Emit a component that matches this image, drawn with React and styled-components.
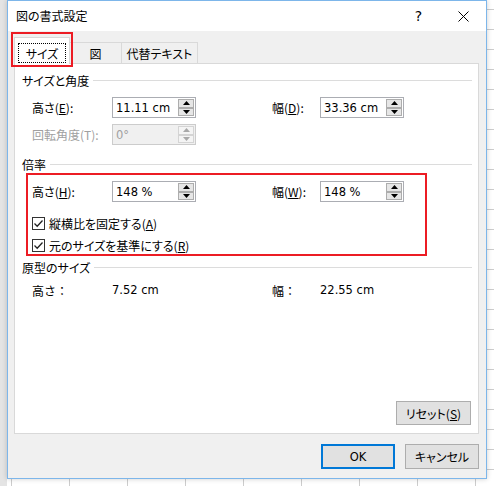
import React from 'react';
import styled, { createGlobalStyle, css } from 'styled-components';

const Global = createGlobalStyle`
  html, body { margin: 0; padding: 0; }
  body {
    font-family: "Noto Sans CJK JP", "Noto Sans", sans-serif;
    font-size: 12px;
    color: #000;
    font-feature-settings: "palt";
  }
`;

const Page = styled.div`
  width: 494px;
  height: 486px;
  box-sizing: border-box;
  padding: 0 7px 7px 7px;
  background-color: #fff;
  background-image:
    linear-gradient(to right, #e4e4e4 7px, transparent 7px),
    linear-gradient(to right, #cdcdcd 1px, transparent 1px),
    linear-gradient(to bottom, #cdcdcd 1px, transparent 1px);
  background-size: 100% 100%, 58px 20px, 58px 20px;
  background-position: 0 0, 11px 0, 0 9px;
  background-repeat: no-repeat, repeat, repeat;
`;

const Dialog = styled.div`
  width: 480px;
  height: 479px;
  box-sizing: border-box;
  border: 1px solid #7db6ea;
  background: #f0f0f0;
  display: flex;
  flex-direction: column;
  box-shadow: 0 0 5px rgba(0, 0, 0, 0.2);
`;

const TitleBar = styled.div`
  height: 30px;
  background: #fff;
  display: flex;
  align-items: center;
  padding-left: 8px;
`;

const Title = styled.div`
  flex: 1;
  font-size: 12px;
  margin-top: -1px;
`;

const CaptionButton = styled.div`
  width: 45px;
  height: 30px;
  display: flex;
  align-items: center;
  justify-content: center;
  font-family: "DejaVu Sans", sans-serif;
  font-size: 14px;
  color: #000;
`;

const Body = styled.div`
  flex: 1;
  display: flex;
  flex-direction: column;
  padding: 6px 7px 0 6px;
`;

const TabStrip = styled.div`
  display: flex;
  align-items: flex-end;
  height: 27px;
  margin-bottom: -1px;
  position: relative;
  z-index: 1;
`;

const Tab = styled.div`
  box-sizing: border-box;
  width: ${(p) => p.$w}px;
  height: ${(p) => (p.$active ? 27 : 22)}px;
  border: 1px solid #d9d9d9;
  border-bottom: ${(p) => (p.$active ? 'none' : '1px solid #d9d9d9')};
  background: ${(p) => (p.$active ? '#fff' : '#f0f0f0')};
  margin-left: ${(p) => (p.$first ? 0 : -1)}px;
  display: flex;
  align-items: center;
  justify-content: center;
  position: relative;
  ${(p) =>
    p.$active &&
    css`
      z-index: 2;
      padding: 5px 3px 1px;
      &::after {
        content: '';
        position: absolute;
        left: -4px;
        right: -4px;
        top: -6px;
        bottom: -3px;
        border: 2px solid #ec1c24;
      }
    `}
`;

const FocusBox = styled.div`
  flex: 1;
  align-self: stretch;
  border: 1px dotted #000;
  display: flex;
  align-items: center;
  justify-content: center;
`;

const Panel = styled.div`
  box-sizing: border-box;
  height: 371px;
  background: #fff;
  border: 1px solid #d9d9d9;
  padding: 8px 6px 8px 7px;
  display: flex;
  flex-direction: column;
`;

const Heading = styled.div`
  height: 16px;
  display: flex;
  align-items: center;
  margin-top: ${(p) => p.$mt || 0}px;
  &::after {
    content: '';
    flex: 1;
    height: 1px;
    background: #dcdcdc;
    margin-left: 4px;
  }
`;

const FieldRow = styled.div`
  display: grid;
  grid-template-columns: 80px 84px 76px 48px 84px;
  align-items: center;
  height: ${(p) => p.$h || 21}px;
  margin-top: ${(p) => p.$mt || 0}px;
  margin-left: ${(p) => (p.$flush ? 0 : 10)}px;
`;

const Label = styled.div`
  color: ${(p) => (p.$disabled ? '#a0a0a0' : '#000')};
  white-space: nowrap;
  font-feature-settings: ${(p) => (p.$fullWidth ? 'normal' : '"palt"')};
`;

const Value = styled.div`
  font-family: "DejaVu Sans", "Noto Sans CJK JP", sans-serif;
  font-size: 11.5px;
  white-space: nowrap;
`;

const Spacer = styled.div``;

const InputBox = styled.div`
  box-sizing: border-box;
  width: 84px;
  height: 21px;
  border: 1px solid ${(p) => (p.$disabled ? '#cccccc' : '#abadb3')};
  background: ${(p) => (p.$disabled ? '#f0f0f0' : '#fff')};
  display: flex;
  align-items: stretch;
`;

const InputText = styled.div`
  flex: 1;
  padding-left: 3px;
  display: flex;
  align-items: center;
  font-family: "DejaVu Sans", "Noto Sans CJK JP", sans-serif;
  font-size: 11.5px;
  color: ${(p) => (p.$disabled ? '#a0a0a0' : '#000')};
`;

const SpinCol = styled.div`
  display: flex;
  flex-direction: column;
  padding: 1px 1px 1px 0;
`;

const SpinBtn = styled.div`
  box-sizing: border-box;
  width: 16px;
  height: 9px;
  border: 1px solid ${(p) => (p.$disabled ? '#d4d4d4' : '#adadad')};
  background: ${(p) => (p.$disabled ? '#f4f4f4' : '#e6e6e6')};
  display: flex;
  align-items: center;
  justify-content: center;
`;

const RedBox = styled.div`
  box-sizing: border-box;
  width: 401px;
  margin-left: 4px;
  margin-top: 1px;
  border: 2px solid #ec1c24;
  padding: 6px 0 0 4px;
  display: flex;
  flex-direction: column;
`;

const CheckRow = styled.div`
  height: 18px;
  display: flex;
  align-items: center;
  margin-top: ${(p) => p.$mt || 0}px;
`;

const CheckBoxSq = styled.div`
  box-sizing: border-box;
  width: 13px;
  height: 13px;
  border: 1px solid #333;
  background: #fff;
  display: flex;
  align-items: center;
  justify-content: center;
  margin-right: 4px;
`;

const Button = styled.div`
  box-sizing: border-box;
  width: ${(p) => p.$w || 74}px;
  height: ${(p) => p.$h || 25}px;
  background: #e1e1e1;
  border: ${(p) => (p.$default ? '2px solid #0078d7' : '1px solid #adadad')};
  display: flex;
  align-items: center;
  justify-content: center;
`;

const LatinText = styled.span`
  font-family: "DejaVu Sans", sans-serif;
  font-size: 11.5px;
`;

const PanelFooter = styled.div`
  margin-top: auto;
  display: flex;
  justify-content: flex-end;
  padding-right: 1px;
`;

const Footer = styled.div`
  display: flex;
  justify-content: flex-end;
  gap: 10px;
  margin-top: 10px;
`;

const Arrow = ({ up, disabled }) => (
  <svg width="7" height="4" viewBox="0 0 7 4">
    <path
      d={up ? 'M0 4 L3.5 0 L7 4 Z' : 'M0 0 L3.5 4 L7 0 Z'}
      fill={disabled ? '#a8a8a8' : '#000'}
    />
  </svg>
);

const Spinner = ({ value, disabled }) => (
  <InputBox $disabled={disabled}>
    <InputText $disabled={disabled}>{value}</InputText>
    <SpinCol>
      <SpinBtn $disabled={disabled}>
        <Arrow up disabled={disabled} />
      </SpinBtn>
      <SpinBtn $disabled={disabled}>
        <Arrow disabled={disabled} />
      </SpinBtn>
    </SpinCol>
  </InputBox>
);

const Check = ({ children, mt }) => (
  <CheckRow $mt={mt}>
    <CheckBoxSq>
      <svg width="11" height="11" viewBox="0 0 11 11">
        <path d="M1.5 5.5 L4.2 8.2 L9.5 2.5" stroke="#222" strokeWidth="1.3" fill="none" />
      </svg>
    </CheckBoxSq>
    {children}
  </CheckRow>
);

export default function App() {
  return (
    <>
      <Global />
      <Page>
        <Dialog>
          <TitleBar>
            <Title>図の書式設定</Title>
            <CaptionButton>?</CaptionButton>
            <CaptionButton>
              <svg width="11" height="11" viewBox="0 0 11 11">
                <path d="M0.5 0.5 L10.5 10.5 M10.5 0.5 L0.5 10.5" stroke="#000" strokeWidth="1" />
              </svg>
            </CaptionButton>
          </TitleBar>
          <Body>
            <TabStrip>
              <Tab $active $first $w={56}>
                <FocusBox>サイズ</FocusBox>
              </Tab>
              <Tab $w={53}>図</Tab>
              <Tab $w={77}>代替テキスト</Tab>
            </TabStrip>
            <Panel>
              <Heading>サイズと角度</Heading>
              <FieldRow $mt={9}>
                <Label>
                  高さ(<u>E</u>):
                </Label>
                <Spinner value="11.11 cm" />
                <Spacer />
                <Label>
                  幅(<u>D</u>):
                </Label>
                <Spinner value="33.36 cm" />
              </FieldRow>
              <FieldRow $mt={6}>
                <Label $disabled>回転角度(T):</Label>
                <Spinner value="0°" disabled />
              </FieldRow>
              <Heading $mt={11}>倍率</Heading>
              <RedBox>
                <FieldRow $flush>
                  <Label>
                    高さ(<u>H</u>):
                  </Label>
                  <Spinner value="148 %" />
                  <Spacer />
                  <Label>
                    幅(<u>W</u>):
                  </Label>
                  <Spinner value="148 %" />
                </FieldRow>
                <Check mt={12}>
                  縦横比を固定する(<u>A</u>)
                </Check>
                <Check mt={4}>
                  元のサイズを基準にする(<u>R</u>)
                </Check>
              </RedBox>
              <Heading $mt={3}>原型のサイズ</Heading>
              <FieldRow $mt={6} $h={18}>
                <Label $fullWidth>高さ：</Label>
                <Value>7.52 cm</Value>
                <Spacer />
                <Label $fullWidth>幅：</Label>
                <Value>22.55 cm</Value>
              </FieldRow>
              <PanelFooter>
                <Button $w={75} $h={24}>
                  リセット(<u>S</u>)
                </Button>
              </PanelFooter>
            </Panel>
            <Footer>
              <Button $default>
                <LatinText>OK</LatinText>
              </Button>
              <Button>キャンセル</Button>
            </Footer>
          </Body>
        </Dialog>
      </Page>
    </>
  );
}
